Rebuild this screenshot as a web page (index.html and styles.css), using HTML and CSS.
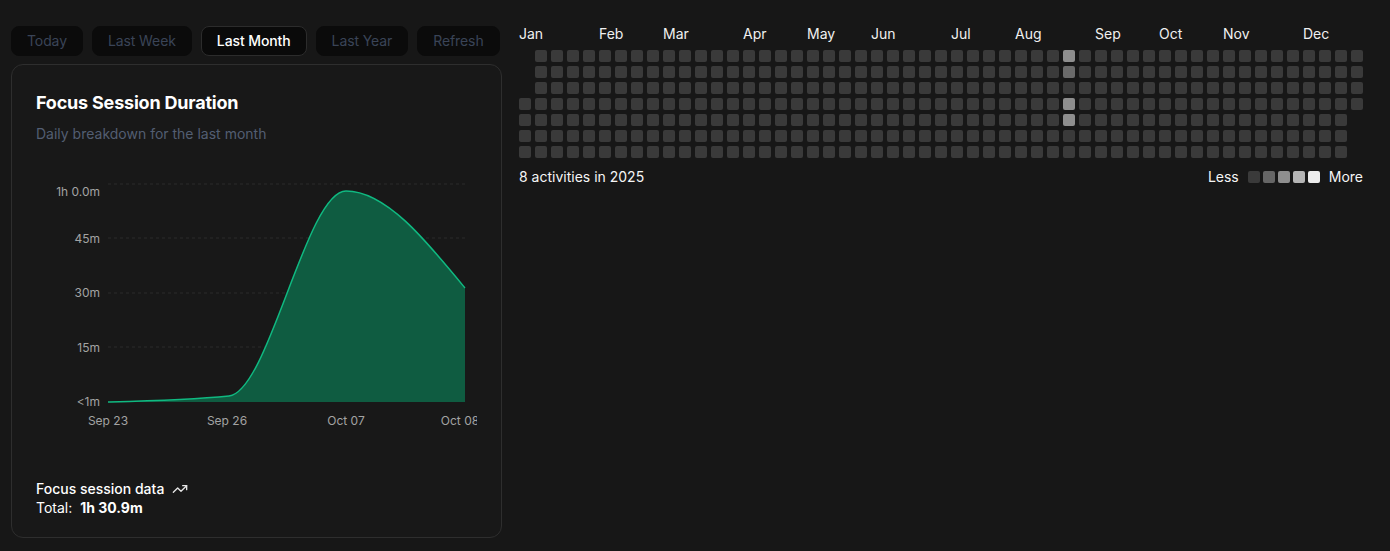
FILE: index.html
```html
<!DOCTYPE html>
<html lang="en">
<head>
<meta charset="utf-8">
<title>Focus Sessions</title>
<link rel="stylesheet" href="styles.css">
</head>
<body>
<main class="page">
  <section class="left">
    <nav class="tabs">
      <button class="tab">Today</button>
      <button class="tab">Last Week</button>
      <button class="tab active">Last Month</button>
      <button class="tab">Last Year</button>
      <button class="tab">Refresh</button>
    </nav>
    <article class="card">
      <h1 class="card-title">Focus Session Duration</h1>
      <p class="card-sub">Daily breakdown for the last month</p>
      <svg class="chart" width="441" height="265" viewBox="0 0 441 265">
        <g class="grid">
          <line x1="72" y1="13" x2="429" y2="13"/>
          <line x1="72" y1="67" x2="429" y2="67"/>
          <line x1="72" y1="122" x2="429" y2="122"/>
          <line x1="72" y1="176" x2="429" y2="176"/>
        </g>
        <path class="area" d="M72,231 C111.7,230 153.3,229 193,225 C232.7,221 270.3,20 310,20 C349.7,20 389.3,68.5 429,117 L429,231 L72,231 Z"/>
        <path class="line" d="M72,231 C111.7,230 153.3,229 193,225 C232.7,221 270.3,20 310,20 C349.7,20 389.3,68.5 429,117"/>
        <g class="ylabels">
          <text x="64" y="25">1h 0.0m</text>
          <text x="64" y="72">45m</text>
          <text x="64" y="126">30m</text>
          <text x="64" y="181">15m</text>
          <text x="64" y="235">&lt;1m</text>
        </g>
        <g class="xlabels">
          <text x="72" y="254">Sep 23</text>
          <text x="191" y="254">Sep 26</text>
          <text x="310" y="254">Oct 07</text>
          <text x="424" y="254">Oct 08</text>
        </g>
      </svg>
      <footer class="card-foot">
        <div class="foot-line">Focus session data
          <svg class="trend" width="16" height="16" viewBox="0 0 24 24" fill="none" stroke="currentColor" stroke-width="2" stroke-linecap="round" stroke-linejoin="round"><polyline points="22 7 13.5 15.5 8.5 10.5 2 17"/><polyline points="16 7 22 7 22 13"/></svg>
        </div>
        <div class="total">Total: <strong>1h 30.9m</strong></div>
      </footer>
    </article>
  </section>
  <section class="heat">
    <div class="months" id="months"></div>
    <div class="cells" id="cells"></div>
    <div class="heat-foot">
      <span>8 activities in 2025</span>
      <span class="legend">Less
        <i class="sw l0"></i><i class="sw l1"></i><i class="sw l2"></i><i class="sw l3"></i><i class="sw l4"></i>
        More</span>
    </div>
  </section>
</main>
<script src="heatmap.js"></script>
</body>
</html>
```
FILE: styles.css
```css
* { box-sizing: border-box; }
html, body { margin: 0; background: #171717; }
body {
  font-family: Inter, "Noto Sans", "Liberation Sans", sans-serif;
  color: #f5f5f5;
  width: 1390px;
  height: 551px;
  overflow: hidden;
}
.page {
  display: flex;
  gap: 16px;
  padding: 24px 0 0 11px;
}
.left {
  width: 492px;
  padding-top: 2px;
  display: flex;
  flex-direction: column;
  gap: 8px;
}
.tabs { display: flex; gap: 9px; }
.tab {
  height: 30px;
  padding: 0 15px;
  border: 1px solid #0b0b0b;
  border-radius: 8px;
  background: #0b0b0b;
  color: #3a4457;
  font: 400 14px/28px Inter, "Liberation Sans", sans-serif;
  letter-spacing: -0.1px;
  white-space: nowrap;
  flex: 0 0 auto;
}
.tab.active {
  background: #0a0a0a;
  border-color: #2c2c2c;
  color: #ffffff;
  font-weight: 500;
}
.card {
  height: 474px;
  width: 491px;
  border: 1px solid #2e2e2e;
  border-radius: 12px;
  background: #181818;
  padding: 24px 24px 20px;
  display: flex;
  flex-direction: column;
}
.card-title {
  margin: 0;
  font-size: 18px;
  line-height: 28px;
  font-weight: 700;
  color: #ffffff;
  letter-spacing: -0.2px;
}
.card-sub {
  margin: 7px 0 0;
  font-size: 14px;
  line-height: 20px;
  color: #535e72;
}
.chart { display: block; margin-top: 27px; overflow: hidden; }
.grid line { stroke: #2b2b2b; stroke-width: 1; stroke-dasharray: 3 3; }
.area { fill: #0f5c41; }
.line { fill: none; stroke: #10b981; stroke-width: 1.5; }
.ylabels text { fill: #a3a3a3; font-size: 12px; text-anchor: end; }
.xlabels text { fill: #a3a3a3; font-size: 12px; text-anchor: middle; }
.card-foot { margin-top: auto; font-size: 14px; line-height: 19px; }
.foot-line { display: flex; align-items: center; gap: 8px; font-weight: 500; color: #ffffff; }
.trend { color: #e5e5e5; }
.total { color: #ffffff; }
.total strong { font-weight: 700; margin-left: 4px; }

.heat { width: 844px; display: flex; flex-direction: column; }
.months, .cells {
  display: grid;
  grid-template-columns: repeat(53, 12px);
  column-gap: 4px;
}
.months { height: 20px; font-size: 14px; line-height: 20px; color: #f0f0f0; }
.month { white-space: nowrap; grid-row: 1; }
.cells {
  margin-top: 6px;
  grid-template-rows: repeat(7, 12px);
  row-gap: 4px;
  grid-auto-flow: column;
}
.cell { width: 12px; height: 12px; border-radius: 2px; background: #3a3a3a; }
.cell.first { grid-row-start: 4; }
.cell.lv1 { background: #6a6a6a; }
.cell.lv2 { background: #8e8e8e; }
.heat-foot {
  margin-top: 9px;
  display: flex;
  justify-content: space-between;
  font-size: 14px;
  line-height: 20px;
  color: #f5f5f5;
}
.legend { display: flex; align-items: center; gap: 3px; }
.sw { width: 12px; height: 12px; border-radius: 2px; display: inline-block; }
.sw.l0 { margin-left: 6px; background: #3a3a3a; }
.sw.l4 { margin-right: 6px; background: #ececec; }
.sw.l1 { background: #666666; }
.sw.l2 { background: #8e8e8e; }
.sw.l3 { background: #b5b5b5; }
```
FILE: heatmap.js
```js
(function () {
  var cells = document.getElementById('cells');
  var levels = { 235: 'lv2', 236: 'lv1', 238: 'lv2', 239: 'lv2' };
  for (var d = 0; d < 365; d++) {
    var c = document.createElement('i');
    c.className = 'cell' + (d === 0 ? ' first' : '') + (levels[d] ? ' ' + levels[d] : '');
    cells.appendChild(c);
  }
  var months = [['Jan', 1], ['Feb', 6], ['Mar', 10], ['Apr', 15], ['May', 19], ['Jun', 23],
    ['Jul', 28], ['Aug', 32], ['Sep', 37], ['Oct', 41], ['Nov', 45], ['Dec', 50]];
  var row = document.getElementById('months');
  months.forEach(function (m) {
    var s = document.createElement('span');
    s.className = 'month';
    s.textContent = m[0];
    s.style.gridColumnStart = m[1];
    row.appendChild(s);
  });
})();
```
